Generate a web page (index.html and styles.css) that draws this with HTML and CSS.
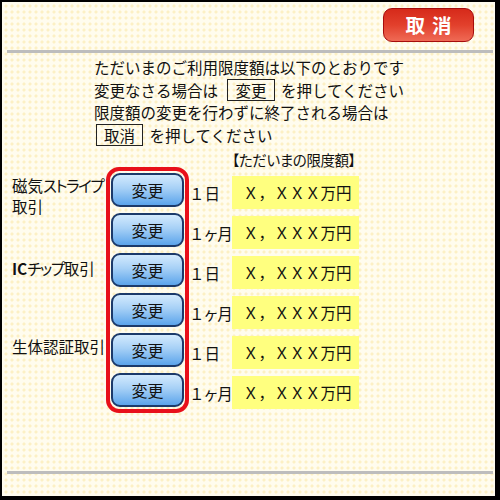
FILE: index.html
```html
<!DOCTYPE html>
<html lang="ja">
  <head>
    <meta charset="UTF-8" />
    <title>限度額変更</title>
    <link rel="stylesheet" href="styles.css">
  </head>
  <body>
    <div class="screen">
      <div class="top-bar">
        <button class="btn-cancel">取消</button>
      </div>
      <div class="rule"></div>

      <!-- 案内文 -->
      <p class="intro">
        ただいまのご利用限度額は以下のとおりです<br>
        変更なさる場合は <span class="key">変更</span> を押してください<br>
        限度額の変更を行わずに終了される場合は<br>
        <span class="key key-first">取消</span> を押してください
      </p>

      <div class="limit-head">【ただいまの限度額】</div>

      <div class="limits">
        <div class="labels">
          <div class="lbl lbl-mag">磁気<span class="kana">ストライプ</span><br>取引</div>
          <div class="lbl lbl-ic"><b>IC</b><span class="kana">チップ</span>取引</div>
          <div class="lbl lbl-bio">生体認証取引</div>
        </div>

        <!-- 変更ボタン (赤枠) -->
        <div class="change-box">
          <button class="btn-change">変更</button>
          <button class="btn-change">変更</button>
          <button class="btn-change">変更</button>
          <button class="btn-change">変更</button>
          <button class="btn-change">変更</button>
          <button class="btn-change">変更</button>
        </div>

        <div class="rows">
          <div class="row"><span class="period">１日</span><span class="amount">Ｘ，ＸＸＸ万円</span></div>
          <div class="row"><span class="period">１<span class="ke">ヶ</span>月</span><span class="amount">Ｘ，ＸＸＸ万円</span></div>
          <div class="row"><span class="period">１日</span><span class="amount">Ｘ，ＸＸＸ万円</span></div>
          <div class="row"><span class="period">１<span class="ke">ヶ</span>月</span><span class="amount">Ｘ，ＸＸＸ万円</span></div>
          <div class="row"><span class="period">１日</span><span class="amount">Ｘ，ＸＸＸ万円</span></div>
          <div class="row"><span class="period">１<span class="ke">ヶ</span>月</span><span class="amount">Ｘ，ＸＸＸ万円</span></div>
        </div>
      </div>

      <div class="rule rule-bottom"></div>
    </div>
  </body>
</html>
```

FILE: styles.css
```css
* {
  padding: 0;
  margin: 0;
  box-sizing: border-box;
}

body {
  font-family: "Noto Sans CJK JP", "Noto Sans", sans-serif;
  color: #111;
}

.screen {
  width: 500px;
  height: 500px;
  border-style: solid;
  border-color: #000;
  border-width: 2px 5px 4px 2px;
  background-color: #fffcee;
  background-image: radial-gradient(circle, #fcf0c4 1.2px, transparent 1.9px);
  background-size: 6px 6px;
  background-position: 1px 1px;
}

.top-bar {
  display: flex;
  justify-content: flex-end;
  padding: 6px 21px 0 0;
}

.btn-cancel {
  width: 91px;
  height: 34px;
  border: 1px solid #a50d0d;
  border-radius: 9px;
  background: linear-gradient(#d62a1a, #e2402c 50%, #ef6a55);
  color: #fff;
  font-family: inherit;
  font-size: 19.5px;
  font-weight: bold;
  letter-spacing: 7px;
  padding-left: 7px;
  line-height: 30px;
}

/* 区切り線 */
.rule {
  height: 3px;
  background-color: #bdbdbd;
  margin: 8px 2px 0 5px;
}

.rule-bottom {
  margin-top: 58px;
}

.intro {
  margin: 3px 0 0 92px;
  font-size: 15.5px;
  line-height: 22.5px;
}

.key {
  display: inline-block;
  border: 1px solid #222;
  line-height: 20px;
  padding: 0 7px;
  margin: 0 3px 0 6px;
}

.key-first {
  margin-left: 2px;
}

.limit-head {
  margin: 6px 0 0 230px;
  height: 15px;
  font-size: 14.5px;
  line-height: 15px;
  letter-spacing: -0.4px;
  font-feature-settings: "palt";
}

.limits {
  display: flex;
}

.labels {
  width: 104px;
  padding: 7.5px 0 0 10px;
  font-size: 15.5px;
  line-height: 21px;
  white-space: nowrap;
}

/* カタカナは詰めて表示 */
.kana {
  font-feature-settings: "palt";
  letter-spacing: -1.4px;
}

.lbl-ic {
  margin-top: 41px;
}

.lbl-bio {
  margin-top: 57px;
}

.change-box {
  width: 83px;
  border: 4px solid #e8101a;
  border-radius: 13px;
  padding: 2px 1px;
  display: flex;
  flex-direction: column;
  gap: 6px;
}

.btn-change {
  width: 73px;
  height: 34px;
  border: 2px solid #1c3a6a;
  border-radius: 9px;
  background: linear-gradient(#d3eafd, #a6d0f6 45%, #5ba4eb);
  font-family: inherit;
  font-size: 16px;
  color: #111;
  line-height: 28px;
}

.rows {
  padding-top: 9px;
  display: flex;
  flex-direction: column;
  gap: 7px;
}

.row {
  display: flex;
  height: 33px;
  align-items: center;
  font-size: 15.5px;
}

.period {
  width: 43px;
  white-space: nowrap;
}

.ke {
  font-feature-settings: "palt";
}

.amount {
  width: 127px;
  height: 33px;
  line-height: 33px;
  padding-left: 11px;
  background-color: #ffff7f;
}
```
